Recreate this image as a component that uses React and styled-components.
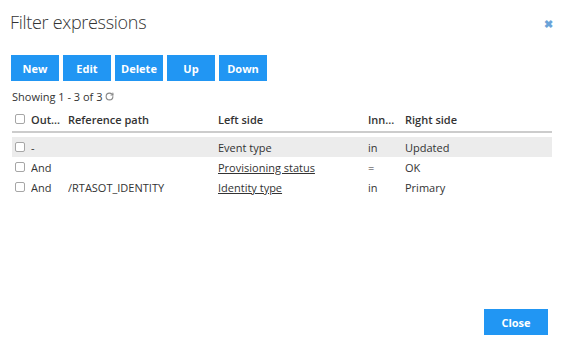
import styled, { createGlobalStyle } from 'styled-components';
import { RotateCw } from 'lucide-react';

const GlobalStyle = createGlobalStyle`
  html, body {
    margin: 0;
    padding: 0;
    background: #fff;
    font-family: 'Open Sans', 'Liberation Sans', sans-serif;
    color: #333;
  }
`;

// fenêtre de dialogue
const Dialog = styled.div`
  box-sizing: border-box;
  width: 566px;
  height: 339px;
  padding: 9px 14px 3px 12px;
  display: flex;
  flex-direction: column;
`;

const Header = styled.header`
  display: flex;
  justify-content: space-between;
  align-items: center;
  height: 26px;
`;

const Title = styled.h1`
  margin: 0 0 0 -2px;
  font-size: 18px;
  font-weight: 300;
  color: #333;
  letter-spacing: -0.3px;
`;

const CloseCross = styled.span`
  color: #6aa3d8;
  font-size: 11px;
  font-weight: 700;
  line-height: 1;
  margin-top: 2px;
  margin-right: -1px;
`;

// barre d'outils
const Toolbar = styled.div`
  display: flex;
  gap: 4px;
  margin-top: 20px;
  margin-left: -1px;
`;

const Button = styled.button`
  box-sizing: border-box;
  width: ${(p) => p.$width || 48}px;
  height: 26px;
  border: none;
  padding: 0;
  background: #2196f3;
  color: #fff;
  font-family: inherit;
  font-size: 11px;
  font-weight: 700;
  cursor: pointer;
`;

const Status = styled.div`
  display: flex;
  align-items: center;
  gap: 3px;
  margin-top: 7px;
  font-size: 11px;
  color: #333;
  height: 16px;
`;

// tableau
const Table = styled.div`
  margin-top: 3px;
  width: 540px;
  font-size: 11px;
`;

const Row = styled.div`
  display: grid;
  grid-template-columns: 19px 37px 150px 150px 37px 1fr;
  align-items: center;
  height: ${(p) => (p.$head ? 24 : 20)}px;
  background: ${(p) => (p.$selected ? '#ececec' : 'transparent')};
  border-bottom: ${(p) => (p.$head ? '2px solid #cccccc' : 'none')};
  margin-bottom: ${(p) => (p.$head ? 4 : 0)}px;
  font-weight: ${(p) => (p.$head ? 600 : 400)};
`;

const Cell = styled.span`
  white-space: nowrap;
  overflow: hidden;
`;

const LinkCell = styled(Cell)`
  text-decoration: underline;
`;

const Check = styled.span`
  display: block;
  box-sizing: border-box;
  width: 10px;
  height: 10px;
  margin-left: 3px;
  border: 1px solid #a6a6a6;
  border-radius: 2px;
  background: #fff;
`;

const Footer = styled.div`
  margin-top: auto;
  padding: 0 4px 1px 0;
  display: flex;
  justify-content: flex-end;
`;

const rows = [
  { op: '-', path: '', left: 'Event type', link: false, inner: 'in', right: 'Updated', selected: true },
  { op: 'And', path: '', left: 'Provisioning status', link: true, inner: '=', right: 'OK' },
  { op: 'And', path: '/RTASOT_IDENTITY', left: 'Identity type', link: true, inner: 'in', right: 'Primary' },
];

const App = () => (
  <>
    <GlobalStyle />
    <Dialog>
      <Header>
        <Title>Filter expressions</Title>
        <CloseCross>✖</CloseCross>
      </Header>
      <Toolbar>
        {['New', 'Edit', 'Delete', 'Up', 'Down'].map((label) => (
          <Button key={label}>{label}</Button>
        ))}
      </Toolbar>
      <Status>
        Showing 1 - 3 of 3 <RotateCw size={9} color="#888" strokeWidth={3} />
      </Status>
      <Table>
        <Row $head>
          <Check />
          <Cell>Out...</Cell>
          <Cell>Reference path</Cell>
          <Cell>Left side</Cell>
          <Cell>Inn...</Cell>
          <Cell>Right side</Cell>
        </Row>
        {rows.map((row, index) => (
          <Row key={index} $selected={row.selected}>
            <Check />
            <Cell>{row.op}</Cell>
            <Cell>{row.path}</Cell>
            {row.link ? <LinkCell>{row.left}</LinkCell> : <Cell>{row.left}</Cell>}
            <Cell>{row.inner}</Cell>
            <Cell>{row.right}</Cell>
          </Row>
        ))}
      </Table>
      <Footer>
        <Button $width={64}>Close</Button>
      </Footer>
    </Dialog>
  </>
);

export default App;
